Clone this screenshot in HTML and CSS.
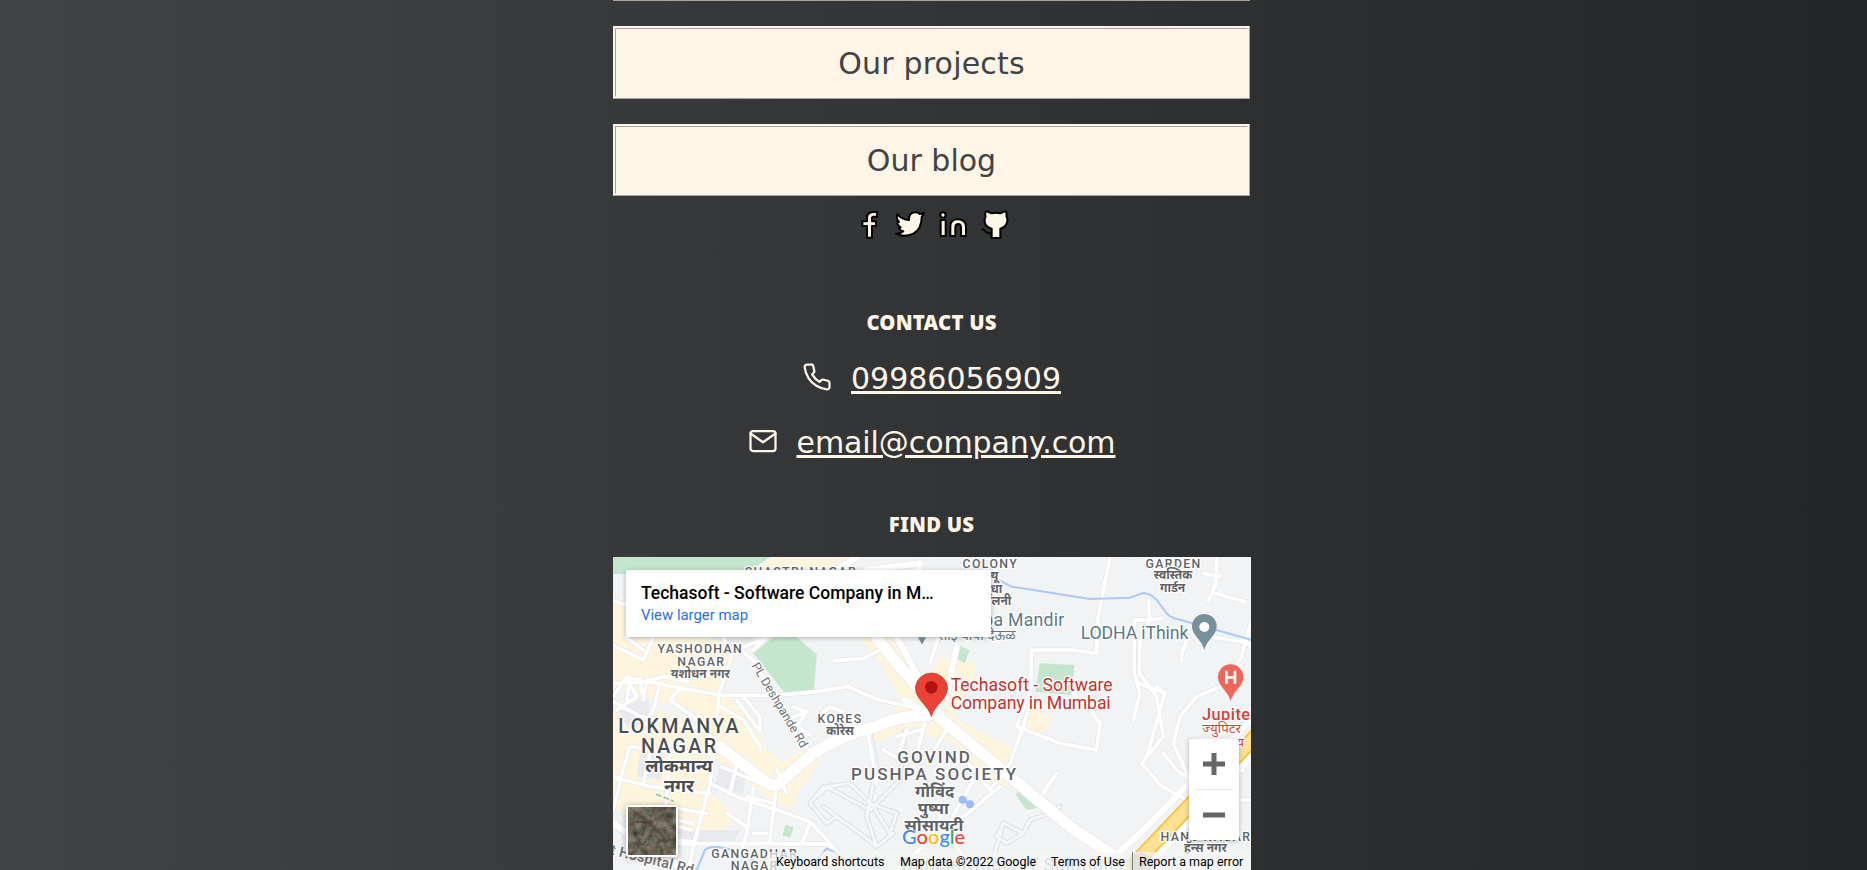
FILE: index.html
```html
<!DOCTYPE html>
<html lang="en">
<head>
<meta charset="utf-8">
<title>Our company</title>
<link rel="stylesheet" href="styles.css">
</head>
<body>
<main class="page">
  <div class="previous-edge"></div>
  <a class="button button-projects">Our projects</a>
  <a class="button button-blog">Our blog</a>

  <nav class="social">
    <svg width="22" height="30" viewBox="24 30 66 90"><path d="M78 36H69Q48 36 48 53V64H34V78H48V113H63V78H75V64H63V55Q63 50 68 50H78Z"/></svg>
    <svg width="33" height="30" viewBox="129 30 99 90"><path d="M142 43Q156 59 177 60Q176 38 195 37Q203 36 209 42L222 39L215 52Q215 88 190 101Q163 114 138 101Q151 102 160 94Q148 91 147 82H152Q141 75 142 65L147 66Q137 55 142 43Z"/></svg>
    <svg width="30" height="30" viewBox="264 30 90 90"><circle cx="279" cy="45" r="8"/><path d="M272 60H287V108H272ZM301 108V78Q302 58 323 58Q348 58 348 81V108H333V83Q333 72 325 72Q316 72 316 83V108Z"/></svg>
    <svg width="30" height="30" viewBox="390 30 90 90"><path class="tail" d="M397 88Q403 88 407 95Q412 101 424 100"/><path d="M407 35Q414 33 424 40Q437 36 451 40Q461 33 468 35Q471 44 469 49Q474 57 471 67Q468 81 451 86V114H425V86Q407 81 404 67Q403 56 407 49Q404 43 407 35Z"/></svg>
  </nav>

  <h3 class="heading">CONTACT US</h3>
  <div class="contact">
    <svg class="line-icon" viewBox="0 0 24 24"><path d="M22 16.92v3a2 2 0 0 1-2.18 2 19.79 19.79 0 0 1-8.63-3.07 19.5 19.5 0 0 1-6-6A19.79 19.79 0 0 1 2.12 4.18 2 2 0 0 1 4.11 2h3a2 2 0 0 1 2 1.72c.127.96.361 1.903.7 2.81a2 2 0 0 1-.45 2.11L8.09 9.91a16 16 0 0 0 6 6l1.27-1.27a2 2 0 0 1 2.11-.45c.907.339 1.85.573 2.81.7A2 2 0 0 1 22 16.92z"/></svg>
    <a class="contact-link">09986056909</a>
  </div>
  <div class="contact contact-mail">
    <svg class="line-icon" viewBox="0 0 24 24"><rect x="2" y="4" width="20" height="16" rx="2"/><path d="M22 6l-10 7L2 6"/></svg>
    <a class="contact-link">email@company.com</a>
  </div>
  <h3 class="heading heading-find">FIND US</h3>

  <section class="map">
    <svg class="map-canvas" width="638" height="313" viewBox="9 21 1914 939">
      <defs>
        <g id="streets">
          <path d="M9 152L50 165M9 286L100 330L130 262M48 262L100 300M9 400L120 395L230 418L340 436L500 436L620 425L715 410L800 448L900 470M9 440L50 380L100 395L160 380L235 395M50 380L80 440L20 480M60 395L50 450M90 385L95 430M110 390L100 450M150 400L130 480L100 530M215 410L180 450L250 500L330 590M340 262L365 320L325 440L320 520M380 300L470 262M380 290L440 340L520 500L600 610M470 262L430 300M675 332L760 325L830 290M625 500L660 470L700 485"/>
          <path d="M9 455L90 500L200 520M60 590L30 690L9 680M60 590L140 600L310 610M9 680L120 710L300 730M310 610L300 700L250 890L235 960M120 610L100 700M180 610L165 800M30 700L9 780M300 700L380 740L500 780L600 815L660 880L700 930M380 640L360 730M335 650L450 700M430 715L410 850L380 950M500 700L480 870M350 790L410 830M410 740L490 760M250 880L650 882L700 930M170 770L290 790M200 810L250 820M210 830L245 840M430 850H470M600 820L575 880M500 660L530 730M450 590L400 510L330 470M380 450L450 545L450 500L400 440"/>
          <path d="M550 470L590 485L560 530L600 555M560 530L540 505L580 490M775 555L800 700M890 640L820 600M945 520L900 680M890 540L870 600M1000 780L960 870L860 960M1090 690L1000 850M930 540L860 560M1010 540L960 620M1060 620L1140 720L1200 640L1240 530L1265 440M1000 850L1170 710M1000 830L1060 920L1110 960M1300 730L1340 670"/>
          <path d="M1500 21L1465 200L1460 310L1390 300H1265L1262 420L1220 530L1350 580L1460 600L1470 520L1440 480L1390 430M1615 150L1620 210L1655 205M1573 210H1620L1590 270L1588 370L1640 440L1660 560L1595 640L1650 705L1730 750M1573 210V370L1590 430M1640 410L1665 430L1610 620M1585 400L1665 430M1715 332V310L1735 260M1820 21L1818 100L1795 155M1815 130L1905 155M1780 70L1830 80M1923 215L1895 320L1830 410L1760 440L1710 500L1690 580L1740 690M1660 610L1700 660L1740 690M1570 510L1590 430M1923 280L1800 260M1890 260L1923 290M1810 680L1900 660M1890 750H1923M1820 950L1860 850M960 340L985 262"/>
        </g>
        <path id="lanes" d="M625 740L650 710L780 780L870 690L885 540M640 710L600 760L650 820L680 800L640 770M650 710L720 700L790 770M790 770L840 850L860 790L780 760M680 800L750 850L800 890L850 850M780 550L800 650L770 800L800 890M1140 960L1180 820L1240 850L1260 810L1320 790L1350 770M1180 820L1160 860L1190 880L1240 850"/>
        <g id="avenues">
          <path d="M800 262L860 340L950 440L990 505L1200 680L1380 830L1530 930"/>
          <path d="M330 590L480 705H500L610 610Q720 545 800 530Q850 500 960 495"/>
        </g>
        <g id="roads">
          <path d="M985 500L930 480L885 450M860 262L930 390M1040 290L1010 440M600 110L740 21M760 130L930 60M770 60L930 40"/>
          <path d="M9 820L70 860L130 900L230 960M70 860L250 880M1530 905L1600 840L1923 510M1630 930L1923 620"/>
        </g>
      </defs>
      <rect x="9" y="21" width="1914" height="939" fill="#f1f3f4"/>
      <g fill="#fef5dc">
        <path d="M440 62L490 21H740L620 60ZM9 145L48 150V262H430L380 300L340 430L430 515L470 600L580 690L540 780L490 755L300 610L310 580L250 480L100 440L9 410ZM9 450L110 470L320 540L330 600L290 720L370 790L340 850L90 830L9 770Z"/>
        <path d="M750 262H845L990 470L890 480L820 350ZM985 315L1030 345L1010 410L970 380ZM1035 320L1100 340L1060 470L1020 500L1000 450ZM850 470L960 440L1060 520L1220 600L1200 710L1130 705L1030 575L960 560ZM1240 470L1325 500L1300 555L1215 530ZM490 660L570 600L630 630L530 780ZM760 550L850 500L930 520L790 580Z"/>
      </g>
      <path d="M20 480L115 440L120 500L60 540ZM290 262H430L390 305L350 280ZM90 610L160 615L155 690L80 680ZM180 840L390 840L370 880L250 880ZM330 650L410 660L400 730L310 720Z" fill="#e8eaed"/>
      <path d="M9 21H480L420 62H50V72H9ZM430 310L490 262H560L620 312L612 420L525 430ZM1290 340L1393 345L1385 435L1275 425ZM1045 285L1078 300L1065 340L1035 325ZM1230 710L1290 735L1320 765L1250 780L1218 735ZM525 825L550 832L542 862L518 858Z" fill="#c3e6cd"/>
      <g fill="none" stroke-linejoin="round" stroke-linecap="round">
        <use href="#lanes" stroke="#e0e3e7" stroke-width="16"/>
        <use href="#lanes" stroke="#f3f5f6" stroke-width="9"/>
        <use href="#streets" stroke="#e3e6e9" stroke-width="15"/>
        <use href="#roads" stroke="#e6e8eb" stroke-width="23"/>
        <use href="#avenues" stroke="#e6e8eb" stroke-width="39"/>
        <use href="#streets" stroke="#fff" stroke-width="11"/>
        <use href="#roads" stroke="#fff" stroke-width="19"/>
        <use href="#avenues" stroke="#fff" stroke-width="34"/>
        <path d="M1010 75L1040 74Q1090 70 1120 75M1165 90L1205 110L1440 147L1560 143L1600 129Q1620 129 1640 150L1670 190Q1683 205 1710 209L1923 269M260 960L285 900Q305 880 380 905L430 930M620 930L650 895L670 905L730 945L820 955" stroke="#aac9fa" stroke-width="6"/>
        <g fill="#9bbdf9"><circle cx="1058" cy="749" r="12"/><circle cx="1080" cy="763" r="12"/></g>
        <path d="M1058 749L1080 763" stroke="#9bbdf9" stroke-width="8"/>
        <path d="M140 733L190 753" stroke="#6bc487" stroke-width="4" stroke-dasharray="14 10"/>
        <path d="M1570 945L1945 550" stroke="#fbbd36" stroke-width="46"/>
        <path d="M1565 950L1950 545" stroke="#fde293" stroke-width="36"/>
      </g>

      <g class="area small">
        <text x="573" y="79">SHASTRI NAGAR</text>
        <text x="271" y="309">YASHODHAN</text><text x="274" y="347">NAGAR</text>
        <text class="hindi" x="271" y="384">यशोधन नगर</text>
        <text x="1141" y="55">COLONY</text>
        <text class="hindi" x="1148" y="91">न्यू</text><text class="hindi" x="1146" y="128">राधा</text><text class="hindi" x="1154" y="165">कॉलनी</text>
        <text x="1691" y="54">GARDEN</text><text class="hindi" x="1689" y="88">स्वस्तिक</text><text class="hindi" x="1688" y="126">गार्डन</text>
        <text x="690" y="519">KORES</text><text class="hindi" x="690" y="555">कोरेस</text>
        <text x="434" y="924">GANGADHAR</text><text x="434" y="961">NAGAR</text>
        <text x="1788" y="874">HANS NAGAR</text><text class="hindi" x="1786" y="907">हॅन्स नगर</text>
      </g>
      <g class="area large">
        <text x="209" y="550">LOKMANYA</text><text x="209" y="610">NAGAR</text>
        <text class="hindi" x="207" y="667">लोकमान्य</text><text class="hindi" x="207" y="725">नगर</text>
      </g>
      <g class="area medium">
        <text x="974" y="638">GOVIND</text><text x="974" y="690">PUSHPA SOCIETY</text>
        <text class="hindi" x="974" y="740">गोविंद</text><text class="hindi" x="970" y="791">पुष्पा</text><text class="hindi" x="972" y="844">सोसायटी</text>
      </g>
      <g class="road-name">
        <text transform="translate(424 347) rotate(59)">PL Deshpande Rd</text>
        <text class="hospital" transform="translate(-1 912) rotate(14)" textLength="256">t Hospital Rd</text>
      </g>
      <g class="place">
        <text x="1090" y="227" textLength="273">aba Mandir</text><text class="hindi" x="984" y="269">साई बाबा देऊळ</text>
        <text x="1412" y="266" textLength="323">LODHA iThink</text>
        <text class="partner" x="875" y="962" textLength="665">Datasetttools IT Solutions</text>
      </g>
      <path d="M924 262H948L936 284Z" fill="#78909c"/>
      <path d="M1783 300C1777 270 1746 258 1746 229A37 37 0 0 1 1820 229C1820 258 1789 270 1783 300Z" fill="#78909c"/><circle cx="1783" cy="231" r="15" fill="#fff"/>
      <circle cx="1592" cy="943" r="34" fill="#78909c" opacity=".55"/>
      <path d="M1862 453C1855 423 1824 410 1824 381A38 38 0 0 1 1900 381C1900 410 1869 423 1862 453Z" fill="#f0655b"/>
      <path d="M1849 362V401M1875 362V401M1849 382H1875" fill="none" stroke="#fff" stroke-width="8"/>
      <g class="hospital-name"><text x="1776" y="510" textLength="163">Jupiter</text><text class="hindi" x="1777" y="550">ज्युपिटर</text><text class="hindi" x="1777" y="590">रुग्णालय</text></g>
      <g class="destination"><text x="1022" y="423" textLength="486">Techasoft - Software</text><text x="1022" y="476" textLength="480">Company in Mumbai</text></g>
      <path d="M964 500C954 463 916 450 916 411A49 49 0 0 1 1013 411C1013 450 974 463 964 500Z" fill="#ea4335" stroke="#d33426" stroke-width="2"/><circle cx="964" cy="412" r="19" fill="#b31412"/>
      <text class="google" x="876" y="881"><tspan fill="#4285f4">G</tspan><tspan fill="#ea4335">o</tspan><tspan fill="#fbbc04">o</tspan><tspan fill="#4285f4">g</tspan><tspan fill="#34a853">l</tspan><tspan fill="#ea4335">e</tspan></text>
    </svg>

    <div class="place-card">
      <div class="place-title">Techasoft - Software Company in M…</div>
      <a class="place-link">View larger map</a>
    </div>

    <svg class="satellite" width="52" height="52" viewBox="0 0 52 52">
      <defs><filter id="terrain" x="0" y="0" width="100%" height="100%" color-interpolation-filters="sRGB"><feTurbulence type="fractalNoise" baseFrequency=".13" numOctaves="4" seed="8"/><feColorMatrix values=".4 .2 0 0 .1  .25 .35 0 0 .08  .25 .3 0 0 .05  0 0 0 0 1"/></filter></defs>
      <rect width="52" height="52" rx="2" fill="#fff"/><rect x="2" y="2" width="48" height="48" filter="url(#terrain)"/>
      <path d="M10 17H18M14 38Q17 42 20 36" fill="none" stroke="#353a2b"/>
    </svg>

    <div class="zoom-control">
      <svg width="50" height="50" viewBox="0 0 50 50"><path d="M14 25H36M25 14V36"/></svg>
      <span class="zoom-divider"></span>
      <svg width="50" height="50" viewBox="0 0 50 50"><path d="M14 25H36"/></svg>
    </div>

    <div class="map-footer">
      <span class="footer-item keyboard">Keyboard shortcuts</span><span class="footer-item data">Map data ©2022 Google</span><span class="footer-item terms">Terms of Use</span><span class="footer-item report">Report a map error</span>
    </div>
  </section>
</main>
</body>
</html>
```
FILE: styles.css
```css
* { box-sizing: border-box; }
html, body { height: 100%; }
body {
  margin: 0;
  overflow: hidden;
  background: linear-gradient(to right, #414345, #232526);
  color: #fdf5e6;
  font-family: "DejaVu Sans", sans-serif;
}
.page {
  display: flex;
  flex-direction: column;
  width: 638px;
  margin-left: 613px;
}
.previous-edge { width: 637px; height: 1px; background: #a9a499; }
.button {
  display: flex;
  align-items: center;
  justify-content: center;
  width: 637px;
  height: 73px;
  margin-top: 25px;
  border: 3px ridge #fdf5e6;
  background: #fdf5e6;
  color: #414345;
  font-size: 30px;
  line-height: 35px;
}
.button-projects { padding-top: 1px; letter-spacing: .2px; }
.button-blog { height: 72px; }
.social {
  display: flex;
  gap: 12px;
  height: 30px;
  margin: 14px 0 0 246px;
}
.social path, .social circle {
  fill: #fdf5e6;
  stroke: #000;
  stroke-width: 6;
  stroke-linejoin: round;
}
.social .tail { fill: none; stroke-linecap: round; }
.heading {
  width: 637px;
  margin: 71px 0 0;
  font-family: "Noto Sans", sans-serif;
  font-size: 20.3px;
  font-weight: 900;
  letter-spacing: .2px;
  line-height: 22px;
  text-align: center;
}
.heading-find { margin-top: 53px; }
.contact {
  display: flex;
  justify-content: center;
  gap: 19px;
  width: 637px;
  height: 35px;
  margin-top: 28px;
}
.contact-mail { margin-top: 29px; letter-spacing: -.08px; }
.line-icon {
  width: 30px;
  height: 30px;
  margin-top: 1px;
  fill: none;
  stroke: #fdf5e6;
  stroke-width: 1.8;
  stroke-linecap: round;
  stroke-linejoin: round;
}
.contact-link { font-size: 30px; line-height: 35px; text-decoration: underline; text-decoration-thickness: 3px; }
.map {
  position: relative;
  height: 313px;
  margin-top: 22px;
  overflow: hidden;
  font-family: Roboto, sans-serif;
}
.map-canvas { display: block; }
.map-canvas text { paint-order: stroke; stroke: #fff; stroke-width: 8px; stroke-linejoin: round; }
.map-canvas .hindi { font-family: "Noto Sans", "Noto Sans Devanagari", sans-serif; letter-spacing: 0; font-weight: 700; }
.area { fill: #5f6368; text-anchor: middle; font-weight: 500; }
.small { font-size: 37px; letter-spacing: 4px; }
.small .hindi { font-size: 36px; }
.large { font-size: 59px; letter-spacing: 7px; fill: #4a4e53; }
.large .hindi { font-size: 54px; }
.medium { font-size: 51px; letter-spacing: 6.3px; }
.medium .hindi { font-size: 50px; }
.road-name { fill: #6b6f73; font-size: 37px; }
.road-name .hospital { font-size: 43px; font-weight: 500; }
.place { fill: #5a7987; font-size: 53px; }
.map-canvas .place .hindi { font-size: 41px; font-weight: 400; }
.place .partner { opacity: .6; }
.hospital-name { fill: #dc3c35; font-size: 49px; font-weight: 500; }
.map-canvas .hospital-name .hindi { font-size: 40px; font-weight: 400; }
.destination { fill: #c5302b; font-size: 53px; }
.map-canvas .google { font-family: Lato, sans-serif; font-size: 60px; font-weight: 500; letter-spacing: 0; stroke-width: 5px; }
.place-card {
  position: absolute;
  left: 13px;
  top: 13px;
  width: 365px;
  height: 67px;
  padding: 12px 15px;
  border-radius: 2px;
  background: #fff;
  box-shadow: 0 1px 5px rgba(0, 0, 0, .28);
  color: #000;
}
.place-title { font-size: 17.5px; font-weight: 500; line-height: 22px; white-space: nowrap; }
.place-link { display: block; color: #2a6fe8; font-size: 14.9px; line-height: 22px; }
.satellite {
  position: absolute;
  left: 13px;
  top: 248px;
  border-radius: 2px;
  filter: drop-shadow(0 1px 3px rgba(0, 0, 0, .35));
}
.zoom-control {
  position: absolute;
  left: 576px;
  top: 182px;
  display: flex;
  flex-direction: column;
  align-items: center;
  width: 50px;
  height: 101px;
  border-radius: 2px;
  background: #fff;
  box-shadow: 0 1px 5px rgba(0, 0, 0, .28);
}
.zoom-control path { fill: none; stroke: #666; stroke-width: 5; }
.zoom-divider { width: 37px; height: 1px; background: #e6e6e6; }
.map-footer {
  position: absolute;
  right: 0;
  bottom: 0;
  display: flex;
  width: 482px;
  height: 18px;
  background: rgba(245, 245, 245, .7);
  color: #000;
  font-size: 12.5px;
  line-height: 20px;
  white-space: nowrap;
}
.footer-item { padding-left: 7px; }
.keyboard { width: 124px; }
.data { width: 151px; }
.terms { width: 88px; }
.report { width: 119px; padding-left: 6px; border-left: 1px solid #75828a; }
```
